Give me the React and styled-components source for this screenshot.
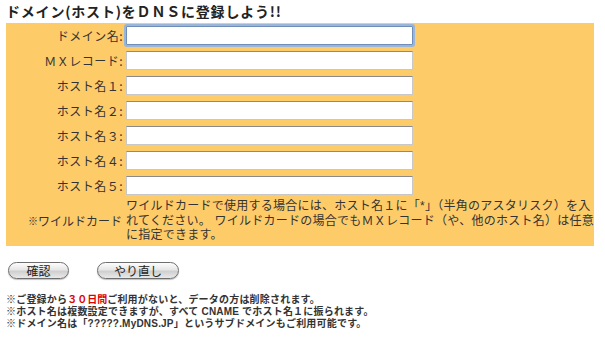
import React from "react";
import styled, { createGlobalStyle, css } from "styled-components";

const Global = createGlobalStyle`
  html, body { margin: 0; padding: 0; background: #fff; }
  body { font-family: "Noto Sans CJK JP", "Noto Sans", sans-serif; color: #333; }
`;

const Page = styled.div`
  width: 605px;
  height: 337px;
  padding: 0 11px 0 6px;
  box-sizing: border-box;
  overflow: hidden;
`;

const Title = styled.h1`
  margin: 0;
  height: 23px;
  font-size: 14px;
  line-height: 23px;
  font-weight: bold;
  color: #222;
  letter-spacing: 0.8px;
  white-space: nowrap;
`;

const Panel = styled.div`
  background: #fecb69;
  display: grid;
  grid-template-columns: 117px 1fr;
  column-gap: 3px;
  padding-bottom: 3px;
`;

const Label = styled.div`
  height: 25px;
  display: flex;
  align-items: center;
  justify-content: flex-end;
  font-size: 12px;
  color: #333;
  letter-spacing: 0.5px;
  white-space: nowrap;
`;

const Field = styled.div`
  height: 25px;
  display: flex;
  align-items: center;
`;

const TextInput = styled.input`
  box-sizing: border-box;
  width: 287px;
  height: 19px;
  margin: 0;
  padding: 0 3px;
  background: #fff;
  border: 1px solid #c8c8c8;
  border-top-color: #8a8a8a;
  outline: none;
  font-size: 12px;
  font-family: inherit;
  ${(p) =>
    p.$focused &&
    css`
      border: 1px solid #6f8fb8;
      box-shadow: 0 0 0 2px #9ab5d8;
      border-radius: 1px;
    `}
`;

const NoteLabel = styled.div`
  display: flex;
  align-items: center;
  justify-content: flex-end;
  font-size: 12px;
  color: #333;
  white-space: nowrap;
  padding-right: 1px;
`;

const Small = styled.span`
  font-size: 10px;
`;

const Note = styled.div`
  font-family: "Liberation Sans", "Noto Sans CJK JP", sans-serif;
  font-size: 12px;
  line-height: 14.5px;
  color: #333;
  padding-top: 1px;
  letter-spacing: 0.25px;
`;

const NoteLine = styled.span`
  display: block;
  white-space: nowrap;
`;

const Buttons = styled.div`
  display: flex;
  gap: 28px;
  padding: 16px 0 0 2px;
  height: 17px;
`;

const Button = styled.button`
  box-sizing: border-box;
  width: ${(p) => p.$w}px;
  height: 17px;
  margin: 0;
  padding: 0;
  border: 1px solid #6e6e6e;
  border-radius: 9px;
  background: linear-gradient(#fdfdfd 0%, #e6e6e6 45%, #cfcfcf 55%, #e9e9e9 100%);
  box-shadow: 0 1px 1px rgba(0, 0, 0, 0.25);
  font-family: inherit;
  font-size: 12px;
  line-height: 15px;
  color: #222;
`;

const Footer = styled.div`
  margin-top: 15px;
  font-family: "Liberation Sans", "Noto Sans CJK JP", sans-serif;
  font-size: 10px;
  line-height: 12px;
  font-weight: bold;
  color: #333;
  letter-spacing: 0.2px;
`;

const FootLine = styled.div`
  white-space: nowrap;
  height: 12px;
`;

const Red = styled.span`
  color: #e00000;
  letter-spacing: 0;
`;

const rows = [
  { label: "ドメイン名:", focused: true },
  { label: "ＭＸレコード:" },
  { label: "ホスト名１:" },
  { label: "ホスト名２:" },
  { label: "ホスト名３:" },
  { label: "ホスト名４:" },
  { label: "ホスト名５:" },
];

export default function App() {
  return (
    <>
      <Global />
      <Page>
        <Title>ドメイン(ホスト)をＤＮＳに登録しよう!!</Title>
        <Panel>
          {rows.map((r) => (
            <React.Fragment key={r.label}>
              <Label>{r.label}</Label>
              <Field>
                <TextInput type="text" $focused={r.focused} autoFocus={r.focused} />
              </Field>
            </React.Fragment>
          ))}
          <NoteLabel>
            <Small>※</Small>ワイルドカード
          </NoteLabel>
          <Note>
            <NoteLine>ワイルドカードで使用する場合には、ホスト名１に「*」（半角のアスタリスク）を入</NoteLine>
            <NoteLine>れてください。 ワイルドカードの場合でもＭＸレコード（や、他のホスト名）は任意</NoteLine>
            <NoteLine>に指定できます。</NoteLine>
          </Note>
        </Panel>
        <Buttons>
          <Button $w={61}>確認</Button>
          <Button $w={82}>やり直し</Button>
        </Buttons>
        <Footer>
          <FootLine>
            ※ご登録から<Red>３０日間</Red>ご利用がないと、データの方は削除されます。
          </FootLine>
          <FootLine>※ホスト名は複数設定できますが、すべて CNAME でホスト名１に振られます。</FootLine>
          <FootLine>※ドメイン名は「?????.MyDNS.JP」というサブドメインもご利用可能です。</FootLine>
        </Footer>
      </Page>
    </>
  );
}
